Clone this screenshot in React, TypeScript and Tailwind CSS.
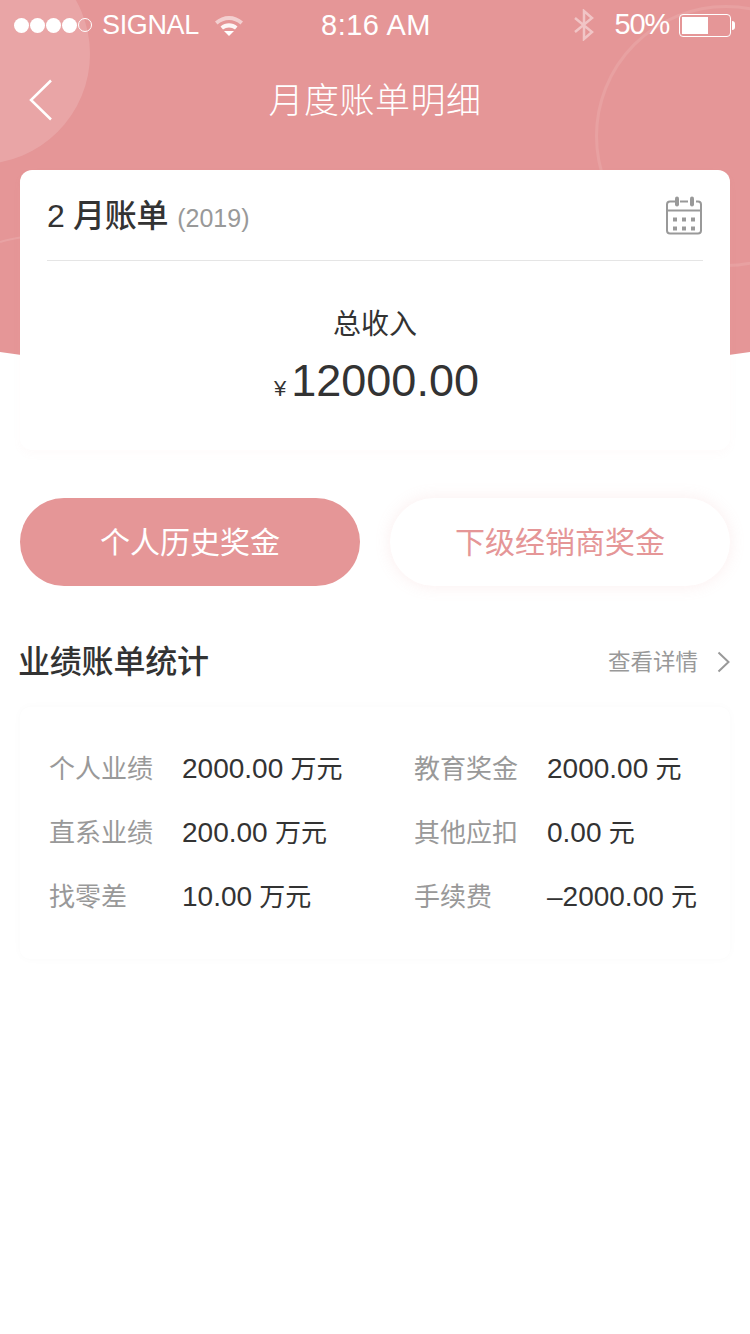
import React from 'react';

const cjk = "font-['Liberation_Sans','Noto_Sans_CJK_SC',sans-serif]";

const rows = [
    { a: '个人业绩', b: '2000.00', bu: '万元', c: '教育奖金', d: '2000.00', du: '元' },
    { a: '直系业绩', b: '200.00', bu: '万元', c: '其他应扣', d: '0.00', du: '元' },
    { a: '找零差', b: '10.00', bu: '万元', c: '手续费', d: '–2000.00', du: '元' },
];

const StatusBar: React.FC = () => (
    <div className="relative flex h-[50px] items-center justify-between pl-[14px] pr-[15px] text-white">
        <div className="flex items-center">
            <div className="flex items-center gap-[1px]">
                <span className="h-[15px] w-[15px] rounded-full bg-white" />
                <span className="h-[15px] w-[15px] rounded-full bg-white" />
                <span className="h-[15px] w-[15px] rounded-full bg-white" />
                <span className="h-[15px] w-[15px] rounded-full bg-white" />
                <span className="h-[14px] w-[14px] rounded-full border border-white" />
            </div>
            <span className="ml-[10px] text-[27px] tracking-[-0.35px]">SIGNAL</span>
            <svg className="ml-[15px]" width="30" height="24" viewBox="0 0 30 24">
                <path d="M1 8.500C9 1 21 1 29 8.500l-2.500 3C20 5.500 10 5.500 3.500 11.500z" fill="#fff" fillOpacity="0.55" />
                <path d="M6.500 13.500c5-4.200 12-4.200 17 0l-2.500 3c-3.500-2.800-8.500-2.800-12 0z" fill="#fff" fillOpacity="0.9" />
                <path d="M10 18h10l-5 5z" fill="#fff" />
            </svg>
        </div>
        <span className="absolute left-[321px] top-[8px] text-[29px] leading-[34px] tracking-[0.5px]">8:16 AM</span>
        <div className="flex items-center">
            <svg width="20" height="32" viewBox="0 0 20 32" fill="none" stroke="#fff" strokeOpacity="0.45" strokeWidth="2.500">
                <path d="M1 9l17 14-8 7V2l8 7L1 23" />
            </svg>
            <span className="ml-[21px] text-[29px] tracking-[-1.2px]">50%</span>
            <div className="ml-[10px] flex h-[23px] w-[52px] items-center rounded-[4px] border border-white p-[2px]">
                <div className="h-full w-[26px] bg-white" />
            </div>
            <span className="ml-[1px] h-[9px] w-[3px] rounded-r-full bg-white" />
        </div>
    </div>
);

export default function App() {
    return (
        <div className={`relative h-[1334px] w-[750px] overflow-hidden bg-white ${cjk}`}>
            {/* header background with curved bottom */}
            <div className="absolute left-[-375px] top-0 h-[378px] w-[1500px] rounded-b-[750px_195px] bg-[#e59697]" />
            <div className="absolute left-[-130px] top-[-56px] h-[220px] w-[220px] rounded-full bg-white/15" />
            <div className="absolute left-[595px] top-[5px] h-[262px] w-[262px] rounded-full border-[3px] border-white/10" />
            <svg className="absolute left-0 top-[234px]" width="24" height="10" viewBox="0 0 24 10" fill="none" stroke="#fff" strokeOpacity="0.12" strokeWidth="2">
                <path d="M0 8Q10 5 24 3" />
            </svg>

            <div className="relative">
                <StatusBar />
                <div className="relative flex h-[100px] items-center justify-center">
                    <svg className="absolute left-[29px] top-[29px]" width="24" height="42" viewBox="0 0 24 42" fill="none" stroke="#fff" strokeWidth="2.500">
                        <path d="M22 1.500L2 21l20 19.500" />
                    </svg>
                    <h1 className="text-[35px] font-light leading-none tracking-[0.5px] text-white">月度账单明细</h1>
                </div>

                <div className="mx-5 mt-5 h-[280px] rounded-[12px] bg-white px-[27px] shadow-[0_4px_8px_rgba(229,150,151,0.04)]">
                    <div className="flex h-[91px] items-center justify-between border-b border-[#e5e5e5]">
                        <div className="flex items-baseline pt-[1px]">
                            <span className="text-[32px] font-medium tracking-[-0.3px] text-[#333]">2 月账单</span>
                            <span className="ml-[9px] text-[25px] text-[#999]">(2019)</span>
                        </div>
                        <svg width="38" height="41" viewBox="0 0 38 40" fill="none">
                            <path d="M11 6H5a3 3 0 0 0-3 3v26a3 3 0 0 0 3 3h28a3 3 0 0 0 3-3V9a3 3 0 0 0-3-3h-2M15 6h8M2 15h34" stroke="#999" strokeWidth="2" />
                            <rect x="10" y="1" width="4" height="10" rx="2" fill="#999" />
                            <rect x="25" y="1" width="4" height="10" rx="2" fill="#999" />
                            <path d="M8 22h4v4H8zM17 22h4v4h-4zM26 22h4v4h-4zM8 31h4v4H8zM17 31h4v4h-4zM26 31h4v4h-4z" fill="#999" />
                        </svg>
                    </div>
                    <div className="flex flex-col items-center pt-[45px] text-[#333]">
                        <span className="text-[28px] leading-[38px]">总收入</span>
                        <div className="mt-[10px] flex items-baseline pl-[3px] leading-[54px]">
                            <span className="mr-[5px] text-[22px] font-medium">¥</span>
                            <span className="text-[45px]">12000.00</span>
                        </div>
                    </div>
                </div>

                <div className="mx-5 mt-12 flex justify-between">
                    <button className="h-[88px] w-[340px] rounded-full bg-[#e59697] text-[30px] text-white">个人历史奖金</button>
                    <button className="h-[88px] w-[340px] rounded-full bg-white text-[30px] text-[#e59697] shadow-[0_0_16px_rgba(229,150,151,0.16)]">下级经销商奖金</button>
                </div>

                <div className="mt-[52px] flex h-[48px] items-center justify-between pl-[18px] pr-[20px]">
                    <h2 className="text-[32px] font-medium leading-[48px] tracking-[-0.2px] text-[#333]">业绩账单统计</h2>
                    <div className="flex items-center">
                        <span className="pt-[1px] text-[22.500px] text-[#999]">查看详情</span>
                        <svg className="ml-[19px]" width="13" height="22" viewBox="0 0 13 22" fill="none" stroke="#999" strokeWidth="2">
                            <path d="M1.500 1.500L11.500 11l-10 9.500" />
                        </svg>
                    </div>
                </div>

                <div className="mx-5 mt-[21px] h-[252px] rounded-[10px] bg-white py-[30px] pl-[30px] shadow-[0_0_10px_rgba(0,0,0,0.025)]">
                    {rows.map((r) => (
                        <div key={r.a} className="flex h-[64px] items-center text-[26px]">
                            <span className="w-[132px] translate-x-[-1px] pt-[1px] text-[#999]">{r.a}</span>
                            <span className="w-[233px] text-[#333]"><span className="text-[28px]">{r.b}</span> {r.bu}</span>
                            <span className="w-[132px] translate-x-[-1px] pt-[1px] text-[#999]">{r.c}</span>
                            <span className="whitespace-nowrap text-[#333]"><span className="text-[28px]">{r.d}</span> {r.du}</span>
                        </div>
                    ))}
                </div>
            </div>
        </div>
    );
}
